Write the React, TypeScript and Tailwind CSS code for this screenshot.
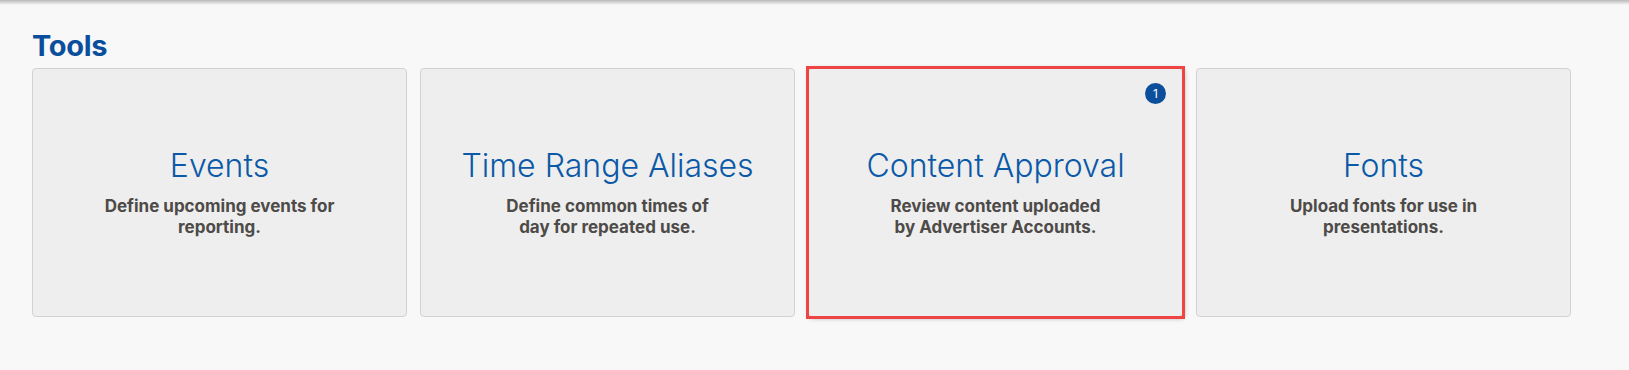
const tools = [
  { title: 'Events', lines: ['Define upcoming events for', 'reporting.'] },
  { title: 'Time Range Aliases', lines: ['Define common times of', 'day for repeated use.'] },
  { title: 'Content Approval', lines: ['Review content uploaded', 'by Advertiser Accounts.'], badge: 1, active: true },
  { title: 'Fonts', lines: ['Upload fonts for use in', 'presentations.'] },
];

function ToolCard(props: { title: string; lines: string[]; badge?: number; active?: boolean }) {
  const { title, lines, badge, active } = props;
  return (
    <div
      className={
        'relative flex h-[249px] w-[375px] flex-col items-center rounded-[4px] border border-[#d2d2d2] bg-[#eeeeee] pt-[77px] ' +
        (active ? 'shadow-[1px_1px_5px_rgba(0,0,0,0.35)]' : '')
      }
    >
      {active ? <span className="pointer-events-none absolute -inset-[3px] border-[3px] border-[#ee4444]" /> : null}
      {badge ? (
        <span className="absolute right-[16px] top-[14px] flex h-[21px] w-[21px] items-center justify-center rounded-full bg-[#0b4f9c] text-[12px] leading-none text-white">
          {badge}
        </span>
      ) : null}
      <div className="text-[32px] font-light leading-[40px] text-[#0b59a7]">{title}</div>
      <div className="mt-[10px] text-center text-[17px] font-bold leading-[21px] text-[#4d4a48]">
        {lines.map((l) => (
          <div key={l}>{l}</div>
        ))}
      </div>
    </div>
  );
}

export default function App() {
  return (
    <div className="relative h-[370px] w-full bg-[#f8f8f8] font-['Inter',sans-serif]">
      <div className="h-[5px] bg-gradient-to-b from-[#b9b9b9] to-[#f8f8f8]" />
      <div className="px-[32px] pt-[24px]">
        <h1 className="text-[29px] font-bold leading-[34px] tracking-[-0.3px] text-[#0b4f9c]">Tools</h1>
        <div className="mt-[5px] flex gap-[13px]">
          {tools.map((t) => (
            <ToolCard key={t.title} {...t} />
          ))}
        </div>
      </div>
    </div>
  );
}
